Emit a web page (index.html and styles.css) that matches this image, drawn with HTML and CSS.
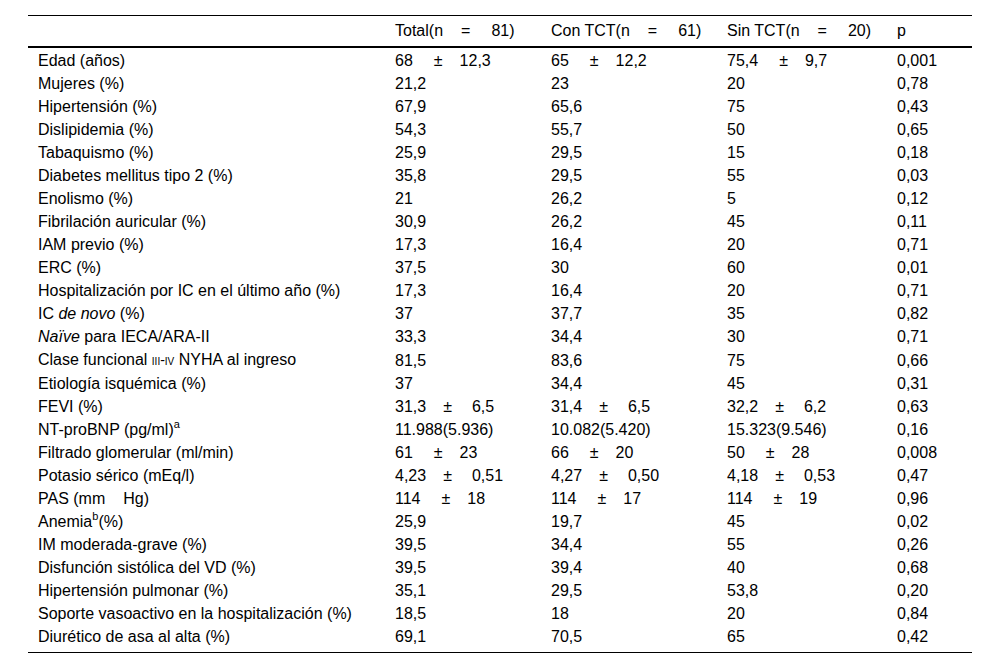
FILE: index.html
```html
<!DOCTYPE html>
<html lang="es">
<head>
<meta charset="utf-8">
<link rel="stylesheet" href="styles.css">
</head>
<body>
<div class="wrap">
<table class="tbl">
<colgroup>
<col class="c-label"><col class="c-total"><col class="c-con"><col class="c-sin"><col class="c-p">
</colgroup>
<thead>
<tr>
<th></th>
<th>Total(n<span class="eq">=</span>81)</th>
<th>Con TCT(n<span class="eq">=</span>61)</th>
<th>Sin TCT(n<span class="eq">=</span>20)</th>
<th>p</th>
</tr>
</thead>
<tbody>
<tr><td>Edad (años)</td><td>68<span class="pm pm-a">±</span>12,3</td><td>65<span class="pm pm-a">±</span>12,2</td><td>75,4<span class="pm pm-a">±</span>9,7</td><td>0,001</td></tr>
<tr><td>Mujeres (%)</td><td>21,2</td><td>23</td><td>20</td><td>0,78</td></tr>
<tr><td>Hipertensión (%)</td><td>67,9</td><td>65,6</td><td>75</td><td>0,43</td></tr>
<tr><td>Dislipidemia (%)</td><td>54,3</td><td>55,7</td><td>50</td><td>0,65</td></tr>
<tr><td>Tabaquismo (%)</td><td>25,9</td><td>29,5</td><td>15</td><td>0,18</td></tr>
<tr><td>Diabetes mellitus tipo 2 (%)</td><td>35,8</td><td>29,5</td><td>55</td><td>0,03</td></tr>
<tr><td>Enolismo (%)</td><td>21</td><td>26,2</td><td>5</td><td>0,12</td></tr>
<tr><td>Fibrilación auricular (%)</td><td>30,9</td><td>26,2</td><td>45</td><td>0,11</td></tr>
<tr><td>IAM previo (%)</td><td>17,3</td><td>16,4</td><td>20</td><td>0,71</td></tr>
<tr><td>ERC (%)</td><td>37,5</td><td>30</td><td>60</td><td>0,01</td></tr>
<tr><td>Hospitalización por IC en el último año (%)</td><td>17,3</td><td>16,4</td><td>20</td><td>0,71</td></tr>
<tr><td>IC <em>de novo</em> (%)</td><td>37</td><td>37,7</td><td>35</td><td>0,82</td></tr>
<tr><td><em>Naïve</em> para IECA/ARA-II</td><td>33,3</td><td>34,4</td><td>30</td><td>0,71</td></tr>
<tr><td>Clase funcional <span class="sc">iii-iv</span> NYHA al ingreso</td><td>81,5</td><td>83,6</td><td>75</td><td>0,66</td></tr>
<tr><td>Etiología isquémica (%)</td><td>37</td><td>34,4</td><td>45</td><td>0,31</td></tr>
<tr><td>FEVI (%)</td><td>31,3<span class="pm pm-b">±</span>6,5</td><td>31,4<span class="pm pm-b">±</span>6,5</td><td>32,2<span class="pm pm-b">±</span>6,2</td><td>0,63</td></tr>
<tr><td>NT-proBNP (pg/ml)<sup>a</sup></td><td>11.988(5.936)</td><td>10.082(5.420)</td><td>15.323(9.546)</td><td>0,16</td></tr>
<tr><td>Filtrado glomerular (ml/min)</td><td>61<span class="pm pm-a">±</span>23</td><td>66<span class="pm pm-a">±</span>20</td><td>50<span class="pm pm-a">±</span>28</td><td>0,008</td></tr>
<tr><td>Potasio sérico (mEq/l)</td><td>4,23<span class="pm pm-b">±</span>0,51</td><td>4,27<span class="pm pm-b">±</span>0,50</td><td>4,18<span class="pm pm-b">±</span>0,53</td><td>0,47</td></tr>
<tr><td>PAS (mm<span class="gap"></span>Hg)</td><td>114<span class="pm pm-a">±</span>18</td><td>114<span class="pm pm-a">±</span>17</td><td>114<span class="pm pm-a">±</span>19</td><td>0,96</td></tr>
<tr><td>Anemia<sup>b</sup>(%)</td><td>25,9</td><td>19,7</td><td>45</td><td>0,02</td></tr>
<tr><td>IM moderada-grave (%)</td><td>39,5</td><td>34,4</td><td>55</td><td>0,26</td></tr>
<tr><td>Disfunción sistólica del VD (%)</td><td>39,5</td><td>39,4</td><td>40</td><td>0,68</td></tr>
<tr><td>Hipertensión pulmonar (%)</td><td>35,1</td><td>29,5</td><td>53,8</td><td>0,20</td></tr>
<tr><td>Soporte vasoactivo en la hospitalización (%)</td><td>18,5</td><td>18</td><td>20</td><td>0,84</td></tr>
<tr class="last"><td>Diurético de asa al alta (%)</td><td>69,1</td><td>70,5</td><td>65</td><td>0,42</td></tr>
</tbody>
</table>
</div>
</body>
</html>
```

FILE: styles.css
```css
html, body {
  margin: 0;
  padding: 0;
  background: #fff;
}

.wrap {
  padding: 15px 28px 0 28px;
}

.tbl {
  width: 944px;
  border-collapse: collapse;
  table-layout: fixed;
  font-family: "Liberation Sans", Arial, sans-serif;
  font-size: 16px;
  color: #000;
}

.c-label { width: 357px; }
.c-total { width: 156px; }
.c-con { width: 176px; }
.c-sin { width: 170px; }
.c-p { width: 85px; }

.tbl thead tr {
  border-top: 1px solid #000;
  border-bottom: 2px solid #000;
}

.tbl th {
  font-weight: normal;
  text-align: left;
  height: 30px;
  padding: 0 0 0 10px;
  line-height: 30px;
  white-space: nowrap;
}

.tbl td {
  height: 23px;
  padding: 0 0 0 10px;
  line-height: 23px;
  white-space: nowrap;
  vertical-align: middle;
}

.tbl tbody tr:first-child td {
  padding-top: 1px;
}

.tbl tr.last {
  border-bottom: 1px solid #000;
}

.tbl tr.last td {
  padding-bottom: 4px;
}

.eq {
  margin: 0 21px 0 18px;
}

.pm-a {
  margin: 0 17px 0 21px;
}

.pm-b {
  margin: 0 20px 0 17px;
}

.gap {
  display: inline-block;
  width: 18px;
}

.sc {
  font-variant: small-caps;
  font-size: 14px;
  text-transform: lowercase;
}

sup {
  font-size: 11px;
  line-height: 0;
  vertical-align: 7px;
}

em {
  font-style: italic;
}
```
